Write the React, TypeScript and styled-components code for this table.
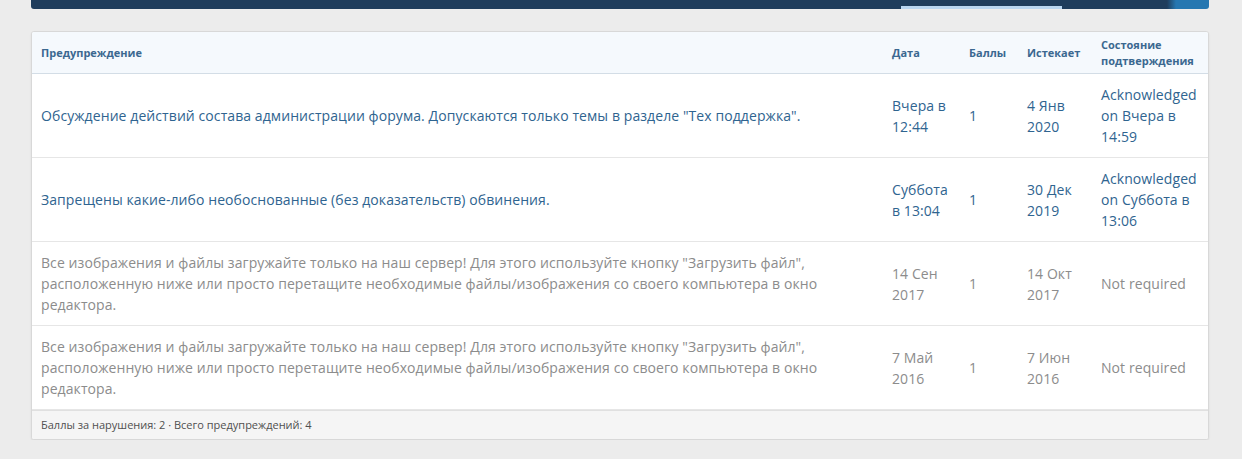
import React from "react";
import styled, { createGlobalStyle } from "styled-components";

const Global = createGlobalStyle`
  html, body { margin: 0; padding: 0; background: #ececec; }
  body { font-family: "Segoe UI", "Open Sans", "Noto Sans", sans-serif; }
`;

const Page = styled.div`
  width: 1178px;
  margin-left: 31px;
  display: flex;
  flex-direction: column;
  gap: 22px;
`;

const NavBar = styled.div`
  height: 9px;
  border-radius: 0 0 3px 3px;
  background: linear-gradient(to right, #1f3d5c 0, #1f3d5c calc(100% - 42px), #2577b1 calc(100% - 33px));
  display: flex;
  justify-content: flex-end;
  align-items: flex-end;
  padding-right: 147px;
`;

const NavTabLine = styled.div`
  width: 161px;
  height: 3px;
  background: #b9d6f0;
`;

const Card = styled.div`
  border: 1px solid #d8d8d8;
  border-radius: 3px;
  background: #fff;
  box-shadow: 0 1px 2px rgba(0, 0, 0, 0.08);
  overflow: hidden;
`;

const cols = "1fr 77px 58px 74px 117px";

const HeadRow = styled.div`
  display: grid;
  grid-template-columns: ${cols};
  background: #f5f9fd;
  border-bottom: 1px solid #d3dde6;
  min-height: 41px;
`;

const HeadCell = styled.div`
  padding: 4px 10px;
  display: flex;
  align-items: center;
  font-size: 11px;
  font-weight: 700;
  line-height: 16px;
  color: #3b6890;
  &:first-child { padding-left: 9px; }
`;

const Row = styled.div`
  display: grid;
  grid-template-columns: ${cols};
  border-bottom: 1px solid #e6e6e6;
  min-height: 83px;
  &:last-of-type { border-bottom: none; }
`;

const Cell = styled.div<{ $muted?: boolean }>`
  padding: 10px;
  display: flex;
  align-items: center;
  font-size: 14px;
  letter-spacing: 0.08px;
  line-height: 21px;
  color: ${(p) => (p.$muted ? "#8c8c8c" : "#2f6490")};
  &:first-child { padding-left: 9px; }
`;

const Footer = styled.div`
  border-top: 1px solid #e0e0e0;
  background: #f5f5f5;
  padding: 6px 9px;
  font-size: 11px;
  line-height: 16px;
  color: #505050;
`;

type W = {
  text: string;
  date: string;
  points: string;
  expires: string;
  status: string;
  muted?: boolean;
};

const upload =
  'Все изображения и файлы загружайте только на наш сервер! Для этого используйте кнопку "Загрузить файл", расположенную ниже или просто перетащите необходимые файлы/изображения со своего компьютера в окно редактора.';

const rows: W[] = [
  {
    text: 'Обсуждение действий состава администрации форума. Допускаются только темы в разделе "Тех поддержка".',
    date: "Вчера в 12:44",
    points: "1",
    expires: "4 Янв 2020",
    status: "Acknowledged on Вчера в 14:59",
  },
  {
    text: "Запрещены какие-либо необоснованные (без доказательств) обвинения.",
    date: "Суббота в 13:04",
    points: "1",
    expires: "30 Дек 2019",
    status: "Acknowledged on Суббота в 13:06",
  },
  { text: upload, date: "14 Сен 2017", points: "1", expires: "14 Окт 2017", status: "Not required", muted: true },
  { text: upload, date: "7 Май 2016", points: "1", expires: "7 Июн 2016", status: "Not required", muted: true },
];

export default function App() {
  return (
    <>
      <Global />
      <Page>
        <NavBar>
          <NavTabLine />
        </NavBar>
        <Card>
          <HeadRow>
            <HeadCell>Предупреждение</HeadCell>
            <HeadCell>Дата</HeadCell>
            <HeadCell>Баллы</HeadCell>
            <HeadCell>Истекает</HeadCell>
            <HeadCell>Состояние подтверждения</HeadCell>
          </HeadRow>
          {rows.map((r, i) => (
            <Row key={i}>
              <Cell $muted={r.muted}>{r.text}</Cell>
              <Cell $muted={r.muted}>{r.date}</Cell>
              <Cell $muted={r.muted}>{r.points}</Cell>
              <Cell $muted={r.muted}>{r.expires}</Cell>
              <Cell $muted={r.muted}>{r.status}</Cell>
            </Row>
          ))}
          <Footer>Баллы за нарушения: 2 · Всего предупреждений: 4</Footer>
        </Card>
      </Page>
    </>
  );
}
